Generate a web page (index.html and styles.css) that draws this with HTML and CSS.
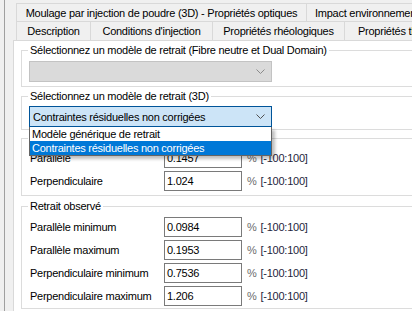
FILE: index.html
```html
<!DOCTYPE html>
<html lang="fr">
<head>
    <meta charset="UTF-8">
    <meta name="viewport" content="width=device-width, initial-scale=1.0">
    <title>Propriétés du matériau - Retrait</title>
<link rel="stylesheet" href="styles.css">
</head>
<body>
<div class="window">
    <div class="edge"><div class="edge-line"></div></div>
    <div class="tabs">
        <div class="tab-row tab-row-top">
            <div class="tab tab-optics">Moulage par injection de poudre (3D) - Propriétés optiques</div>
            <div class="tab tab-impact">Impact environnemental</div>
        </div>
        <div class="tab-row">
            <div class="tab tab-desc">Description</div>
            <div class="tab tab-cond">Conditions d'injection</div>
            <div class="tab tab-rheo">Propriétés rhéologiques</div>
            <div class="tab tab-therm">Propriétés thermiques</div>
        </div>
        <div class="panel">
            <fieldset class="group group-dd">
                <legend>Sélectionnez un modèle de retrait (Fibre neutre et Dual Domain)</legend>
                <div class="combo combo-disabled">
                    <span class="combo-text"></span>
                    <svg class="chevron" width="9" height="5" viewBox="0 0 9 5"><path d="M0.5 0.5 L4.5 4.5 L8.5 0.5" fill="none" stroke="#8a8a8a" stroke-width="1"/></svg>
                </div>
            </fieldset>

            <fieldset class="group group-3d">
                <legend>Sélectionnez un modèle de retrait (3D)</legend>
                <div class="combo-wrap">
                    <div class="combo combo-open">
                        <span class="combo-text">Contraintes résiduelles non corrigées</span>
                        <svg class="chevron" width="9" height="5" viewBox="0 0 9 5"><path d="M0.5 0.5 L4.5 4.5 L8.5 0.5" fill="none" stroke="#505050" stroke-width="1"/></svg>
                    </div>
                    <ul class="dropdown">
                        <li>Modèle générique de retrait</li>
                        <li class="selected">Contraintes résiduelles non corrigées</li>
                    </ul>
                </div>
            </fieldset>

            <fieldset class="group group-raw">
                <legend>Retrait non corrigé</legend>
                <div class="rows">
                    <div class="row">
                        <span class="label">Parallèle</span>
                        <span class="field">0.1457</span>
                        <span class="unit">%</span>
                        <span class="range">[-100:100]</span>
                    </div>
                    <div class="row">
                        <span class="label">Perpendiculaire</span>
                        <span class="field">1.024</span>
                        <span class="unit">%</span>
                        <span class="range">[-100:100]</span>
                    </div>
                </div>
            </fieldset>

            <fieldset class="group group-obs">
                <legend>Retrait observé</legend>
                <div class="rows">
                    <div class="row">
                        <span class="label">Parallèle minimum</span>
                        <span class="field">0.0984</span>
                        <span class="unit">%</span>
                        <span class="range">[-100:100]</span>
                    </div>
                    <div class="row">
                        <span class="label">Parallèle maximum</span>
                        <span class="field">0.1953</span>
                        <span class="unit">%</span>
                        <span class="range">[-100:100]</span>
                    </div>
                    <div class="row">
                        <span class="label">Perpendiculaire minimum</span>
                        <span class="field">0.7536</span>
                        <span class="unit">%</span>
                        <span class="range">[-100:100]</span>
                    </div>
                    <div class="row">
                        <span class="label">Perpendiculaire maximum</span>
                        <span class="field">1.206</span>
                        <span class="unit">%</span>
                        <span class="range">[-100:100]</span>
                    </div>
                </div>
            </fieldset>
        </div>
    </div>
</div>
</body>
</html>
```

FILE: styles.css
```css
html, body {
    margin: 0;
    padding: 0;
    background: #f0f0f0;
    overflow: hidden;
}
body {
    font-family: "Liberation Sans", Arial, sans-serif;
    font-size: 11px;
    letter-spacing: -0.25px;
    color: #000;
}
.window {
    display: flex;
    width: 560px;
    height: 311px;
}
.edge {
    width: 13px;
    flex: none;
    padding-left: 4px;
    box-sizing: border-box;
}
.edge-line {
    width: 1px;
    height: 100%;
    background: #a0a0a0;
}
.tabs {
    flex: 1;
    display: flex;
    flex-direction: column;
}
.tab-row {
    display: flex;
    margin-left: 3px;
}
.tab-row-top {
    margin-top: 3px;
}
.tab {
    flex: none;
    box-sizing: border-box;
    border: 1px solid #d9d9d9;
    border-bottom: none;
    border-right: none;
    background: #f0f0f0;
    text-align: center;
    white-space: nowrap;
    height: 19px;
    line-height: 18px;
}
.tab-row-top .tab {
    height: 18px;
    padding-top: 1px;
    line-height: 16px;
}
.tab-optics { width: 290px; }
.tab-impact {
    text-align: left;
    padding: 0 8px;
    border-right: 1px solid #d9d9d9;
}
.tab-desc { width: 74px; }
.tab-cond { width: 122px; }
.tab-rheo { width: 132px; }
.tab-therm {
    text-align: left;
    padding: 0 13px;
    border-right: 1px solid #d9d9d9;
}

.panel {
    flex: 1;
    background: #fff;
    border-top: 1px solid #d9d9d9;
    border-left: 1px solid #d9d9d9;
    padding: 0 0 0 7px;
}

.group {
    margin: 3px 0 0;
    border: 1px solid #dcdcdc;
    padding: 4px 0 4px 6px;
    min-width: 0;
}
.group legend {
    padding: 0 2px;
    line-height: 13px;
    height: 13px;
}
.group-3d {
    padding-top: 3px;
    padding-bottom: 2px;
}
.group-raw {
    margin-top: 2px;
    padding-top: 3px;
    padding-bottom: 4px;
}
.group-obs {
    margin-top: 4px;
    padding-top: 4px;
    padding-bottom: 2px;
}

.combo {
    width: 243px;
    height: 21px;
    box-sizing: border-box;
    margin-left: 1px;
    display: flex;
    align-items: center;
    padding: 0 6px 0 3px;
}
.combo-text {
    flex: 1;
    white-space: nowrap;
}
.chevron {
    display: block;
}
.combo-disabled {
    background: #dadada;
    border: 1px solid #c3c3c3;
}
.combo-wrap {
    position: relative;
}
.combo-open {
    background: #cce4f7;
    border: 1px solid #005499;
}
.dropdown {
    position: absolute;
    left: 1px;
    top: 21px;
    width: 243px;
    box-sizing: border-box;
    margin: 0;
    padding: 0;
    list-style: none;
    background: #fff;
    border: 1px solid #646464;
    border-top: none;
    box-shadow: 3px 3px 3px rgba(0, 0, 0, 0.25);
    z-index: 2;
}
.dropdown li {
    height: 14px;
    line-height: 14px;
    padding-left: 2px;
    white-space: nowrap;
}
.dropdown li.selected {
    background: #0078d7;
    color: #fff;
}

.rows {
    display: flex;
    flex-direction: column;
    gap: 3px;
    margin-left: 2px;
}
.row {
    display: flex;
    align-items: center;
    height: 20px;
}
.label {
    width: 134px;
    flex: none;
    white-space: nowrap;
}
.field {
    width: 78px;
    height: 20px;
    box-sizing: border-box;
    border: 1px solid #7a7a7a;
    padding-left: 2px;
    line-height: 18px;
    flex: none;
}
.unit {
    margin-left: 5px;
    color: #6b6b6b;
}
.range {
    margin-left: 4px;
    color: #1e1e3c;
}
```
